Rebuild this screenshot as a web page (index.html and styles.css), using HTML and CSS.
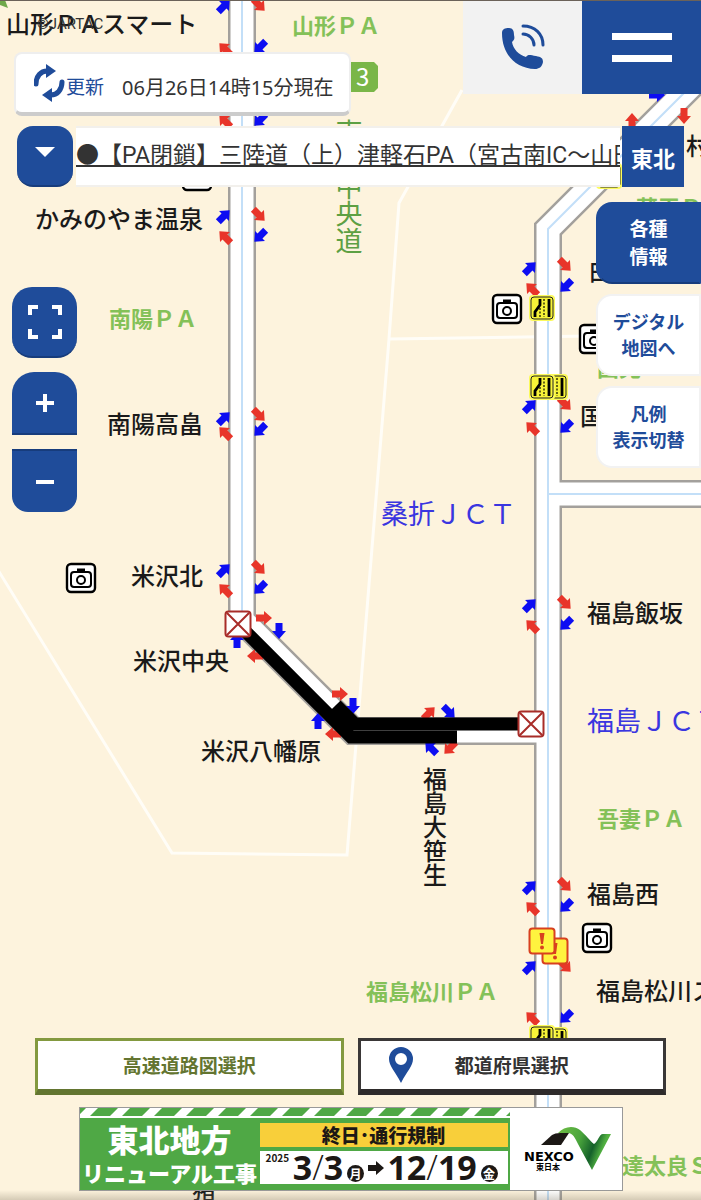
FILE: index.html
```html
<!DOCTYPE html>
<html lang="ja">
<head>
  <meta charset="UTF-8">
  <meta name="viewport" content="width=device-width, initial-scale=1.0">
  <title>道路交通情報</title>
  <link rel="stylesheet" href="styles.css">
</head>
<body>
  <div class="screen">

    <!-- 地図 -->
    <svg class="map" viewBox="0 0 701 1200" preserveAspectRatio="xMidYMid slice">
      <defs>
        <path id="arrow" d="M-8 -3.5H0V-7L8 0L0 7V3.5H-8Z"/>
        <g id="camera">
          <rect x="-14" y="-14" width="28" height="28" rx="4" fill="#fff" stroke="#000" stroke-width="2.4"/>
          <rect x="-10" y="-6" width="20" height="15" rx="3" fill="none" stroke="#000" stroke-width="2"/>
          <path d="M-4 -8H4" stroke="#000" stroke-width="3"/>
          <circle cy="2" r="4" fill="none" stroke="#000" stroke-width="2"/>
        </g>
        <g id="lane">
          <rect x="-13" y="-13" width="26" height="26" rx="4" fill="#fbfa5c"/>
          <rect x="-11" y="-11" width="22" height="22" rx="3" fill="#f7f338" stroke="#222" stroke-width="1"/>
          <path d="M-7 9V4L-2 -3V-9M7 -9V9" fill="none" stroke="#000" stroke-width="2.8"/>
          <path d="M-2 0V9M2 -9V9" stroke="#000" stroke-width="1.2" stroke-dasharray="2 1.5"/>
        </g>
        <g id="closed">
          <rect x="-12.5" y="-12.5" width="25" height="25" rx="3" fill="#fff" stroke="#a82c28" stroke-width="2"/>
          <path d="M-11 -11L11 11M11 -11L-11 11" stroke="#a82c28" stroke-width="2"/>
        </g>
        <g id="warn">
          <rect x="-12.5" y="-12.5" width="25" height="25" rx="3" fill="#fff33f" stroke="#d8401f" stroke-width="2"/>
          <path d="M-2.5 -8H2.5L1 3H-1Z" fill="#d8401f"/>
          <circle cy="6.5" r="2" fill="#d8401f"/>
        </g>
      </defs>

      <!-- 県境 -->
      <path class="border-line" d="M462 90L399 203L389 339L347 855L172 853L-2 570M389 339L590 336"/>
      <path d="M0 0H5L8 8L0 5Z" fill="#6fa84a"/>

      <!-- IC名・PA名 -->
      <g class="ic">
        <text x="6" y="33">山形ＰＡスマート</text>
        <text x="35" y="228">かみのやま温泉</text>
        <text x="107" y="433">南陽高畠</text>
        <text x="131" y="585">米沢北</text>
        <text x="133" y="670">米沢中央</text>
        <text x="201" y="760">米沢八幡原</text>
        <text x="686" y="155">村田</text>
        <text x="588" y="280">白石</text>
        <text x="580" y="425">国見</text>
        <text x="587" y="622">福島飯坂</text>
        <text x="587" y="903">福島西</text>
        <text x="596" y="1000">福島松川スマート</text>
        <text class="vertical" x="435" y="767">福島大笹生</text>
        <text class="vertical" x="204" y="1178">猪苗代</text>
      </g>
      <g class="pa">
        <text x="292" y="34">山形ＰＡ</text>
        <text x="109" y="327">南陽ＰＡ</text>
        <text x="636" y="216">蔵王ＰＡ</text>
        <text x="597" y="376">国見ＳＡ</text>
        <text x="597" y="827">吾妻ＰＡ</text>
        <text x="366" y="1000">福島松川ＰＡ</text>
        <text x="600" y="1174">安達太良ＳＡ</text>
      </g>
      <g class="jct">
        <text x="381" y="524">桑折ＪＣＴ</text>
        <text x="587" y="731">福島ＪＣＴ</text>
      </g>
      <text class="road-name vertical" x="349" y="119">東北中央道</text>
      <path d="M340 62H374L378 66V88L374 92H340Z" fill="#7ab648"/>
      <text class="route-no" x="356" y="86">3</text>

      <!-- 道路 -->
      <g class="road road-edge">
        <path d="M242 -10V620L353 731H548"/>
        <path d="M720 57L548 229V1210"/>
        <path d="M548 494H720"/>
      </g>
      <g class="road road-body">
        <path d="M242 -10V620L353 731H548"/>
        <path d="M720 57L548 229V1210"/>
        <path d="M548 494H720"/>
      </g>
      <g class="road road-center">
        <path d="M242 -10V620"/>
        <path d="M720 57L548 229V1210"/>
        <path d="M548 494H720"/>
      </g>

      <!-- 出入口の矢印 -->
      <g fill="#e8352a">
        <use href="#arrow" transform="translate(259 5) rotate(45)"/>
        <use href="#arrow" transform="translate(225 49) rotate(-135)"/>
        <use href="#arrow" transform="translate(225 121) rotate(-135)"/>
        <use href="#arrow" transform="translate(259 215) rotate(45)"/>
        <use href="#arrow" transform="translate(225 237) rotate(-135)"/>
        <use href="#arrow" transform="translate(259 415) rotate(45)"/>
        <use href="#arrow" transform="translate(225 433) rotate(-135)"/>
        <use href="#arrow" transform="translate(259 568) rotate(45)"/>
        <use href="#arrow" transform="translate(225 590) rotate(-135)"/>
        <use href="#arrow" transform="translate(264 618)"/>
        <use href="#arrow" transform="translate(255 656) rotate(180)"/>
        <use href="#arrow" transform="translate(340 694)"/>
        <use href="#arrow" transform="translate(333 734) rotate(180)"/>
        <use href="#arrow" transform="translate(429 713) rotate(-45)"/>
        <use href="#arrow" transform="translate(450 748) rotate(135)"/>
        <use href="#arrow" transform="translate(565 265) rotate(45)"/>
        <use href="#arrow" transform="translate(532 289) rotate(-135)"/>
        <use href="#arrow" transform="translate(565 404) rotate(45)"/>
        <use href="#arrow" transform="translate(532 428) rotate(-135)"/>
        <use href="#arrow" transform="translate(565 603) rotate(45)"/>
        <use href="#arrow" transform="translate(532 626) rotate(-135)"/>
        <use href="#arrow" transform="translate(565 885) rotate(45)"/>
        <use href="#arrow" transform="translate(532 908) rotate(-135)"/>
        <use href="#arrow" transform="translate(565 966) rotate(45)"/>
        <use href="#arrow" transform="translate(532 1018) rotate(-135)"/>
        <use href="#arrow" transform="translate(632 121) rotate(-90)"/>
        <use href="#arrow" transform="translate(684 116) rotate(90)"/>
      </g>
      <g fill="#0d0df2">
        <use href="#arrow" transform="translate(224 6) rotate(-45)"/>
        <use href="#arrow" transform="translate(260 47) rotate(135)"/>
        <use href="#arrow" transform="translate(260 120) rotate(135)"/>
        <use href="#arrow" transform="translate(224 216) rotate(-45)"/>
        <use href="#arrow" transform="translate(260 236) rotate(135)"/>
        <use href="#arrow" transform="translate(224 418) rotate(-45)"/>
        <use href="#arrow" transform="translate(260 430) rotate(135)"/>
        <use href="#arrow" transform="translate(224 570) rotate(-45)"/>
        <use href="#arrow" transform="translate(260 588) rotate(135)"/>
        <use href="#arrow" transform="translate(279 631) rotate(90)"/>
        <use href="#arrow" transform="translate(237 640) rotate(-90)"/>
        <use href="#arrow" transform="translate(353 706) rotate(90)"/>
        <use href="#arrow" transform="translate(318 721) rotate(-90)"/>
        <use href="#arrow" transform="translate(449 712) rotate(45)"/>
        <use href="#arrow" transform="translate(431 748) rotate(-135)"/>
        <use href="#arrow" transform="translate(530 268) rotate(-45)"/>
        <use href="#arrow" transform="translate(566 286) rotate(135)"/>
        <use href="#arrow" transform="translate(530 406) rotate(-45)"/>
        <use href="#arrow" transform="translate(566 427) rotate(135)"/>
        <use href="#arrow" transform="translate(530 605) rotate(-45)"/>
        <use href="#arrow" transform="translate(566 624) rotate(135)"/>
        <use href="#arrow" transform="translate(530 887) rotate(-45)"/>
        <use href="#arrow" transform="translate(566 906) rotate(135)"/>
        <use href="#arrow" transform="translate(530 967) rotate(-45)"/>
        <use href="#arrow" transform="translate(566 1017) rotate(135)"/>
        <use href="#arrow" transform="translate(657 95)"/>
      </g>

      <!-- 通行止め区間 -->
      <path class="closed-line" d="M240 626L351 737H457"/>
      <path class="closed-line" d="M336 705L355 724H531"/>

      <!-- 規制アイコン -->
      <use href="#camera" x="197" y="176"/>
      <use href="#camera" x="507" y="309"/>
      <use href="#camera" x="594" y="339"/>
      <use href="#camera" x="81" y="578"/>
      <use href="#camera" x="597" y="938"/>
      <use href="#lane" x="609" y="176"/>
      <use href="#lane" x="542" y="308"/>
      <use href="#lane" x="555" y="387"/>
      <use href="#lane" x="542" y="387"/>
      <use href="#lane" x="555" y="1040"/>
      <use href="#lane" x="542" y="1038"/>
      <use href="#closed" x="238" y="624"/>
      <use href="#closed" x="531" y="724"/>
      <use href="#warn" x="555" y="951"/>
      <use href="#warn" x="542" y="941"/>
    </svg>

    <!-- ヘッダー -->
    <header class="header">
      <div class="header-left">
        <p class="copyright">©JARTAC</p>
        <div class="update-box">
          <button class="update-button" type="button">
            <svg width="32" height="38" viewBox="0 0 32 38">
              <path d="M2 20C2 12 7 7 13 7" fill="none" stroke="#1f4c9a" stroke-width="5" stroke-linecap="round"/>
              <path d="M12 0L22 7L12 14Z" fill="#1f4c9a"/>
              <path d="M28 18C28 26 23 31 17 31" fill="none" stroke="#1f4c9a" stroke-width="5" stroke-linecap="round"/>
              <path d="M18 24L8 31L18 38Z" fill="#1f4c9a"/>
            </svg>
            <span>更新</span>
          </button>
          <span class="update-time">06月26日14時15分現在</span>
        </div>
      </div>
      <a class="header-tel" href="#" aria-label="電話">
        <svg width="44" height="46" viewBox="0 0 44 46">
          <path d="M1 9C1 5 4 4 8 4C12 4 13 7 13 11C14 15 13 16 11 18C12 25 18 31 25 33C27 30 29 31 35 32C40 33 42 34 42 38C41 43 38 45 34 45C14 44 1 30 1 9Z" fill="#1f4c9a"/>
          <path d="M22 10C28 10 33 15 33 21M22 2C34 2 42 10 42 21" fill="none" stroke="#1f4c9a" stroke-width="3" stroke-linecap="round"/>
        </svg>
      </a>
      <button class="header-menu" type="button" aria-label="メニュー"><span></span><span></span></button>
    </header>

    <!-- お知らせ -->
    <div class="news">
      <button class="news-toggle" type="button" aria-label="お知らせを開く"></button>
      <div class="news-text"><a href="#">●【PA閉鎖】三陸道（上）津軽石PA（宮古南IC～山田IC）</a></div>
      <button class="news-area" type="button">東北</button>
    </div>

    <!-- 地図の操作ボタン -->
    <div class="controls">
      <div class="zoom">
        <button class="zoom-full" type="button" aria-label="全体表示">
          <svg width="34" height="34" viewBox="0 0 34 34">
            <path d="M2 10V2H10M24 2H32V10M32 24V32H24M10 32H2V24" fill="none" stroke="#fff" stroke-width="4"/>
          </svg>
        </button>
        <button class="zoom-in" type="button" aria-label="拡大">
          <svg width="18" height="18" viewBox="0 0 18 18"><path d="M0 9H18M9 0V18" stroke="#fff" stroke-width="4"/></svg>
        </button>
        <button class="zoom-out" type="button" aria-label="縮小">
          <svg width="18" height="18" viewBox="0 0 18 18"><path d="M0 9H18" stroke="#fff" stroke-width="4"/></svg>
        </button>
      </div>
      <nav class="side">
        <a class="side-button side-info" href="#">各種<br>情報</a>
        <a class="side-button" href="#">デジタル<br>地図へ</a>
        <a class="side-button" href="#">凡例<br>表示切替</a>
      </nav>
    </div>

    <!-- フッター -->
    <footer class="footer">
      <div class="select-row">
        <button class="select-button green" type="button"><span>高速道路図選択</span></button>
        <button class="select-button" type="button">
          <svg width="24" height="36" viewBox="0 0 24 36">
            <path fill-rule="evenodd" d="M12 0A12 12 0 0 1 24 12C24 19 18 24 12 36C6 24 0 19 0 12A12 12 0 0 1 12 0ZM12 6A6 6 0 1 0 12 18A6 6 0 1 0 12 6Z" fill="#1f4c9a"/>
          </svg>
          <span>都道府県選択</span>
        </button>
      </div>

      <a class="banner" href="#">
        <div class="banner-main">
          <svg class="banner-stripe" width="100%" height="10">
            <defs>
              <pattern id="stripe" width="32" height="10" patternUnits="userSpaceOnUse">
                <path d="M18 0H38L30 8H10ZM-14 0H6L-2 8H-22Z" fill="#4fa845"/>
              </pattern>
            </defs>
            <rect width="100%" height="10" fill="#fff"/>
            <rect width="100%" height="10" fill="url(#stripe)"/>
          </svg>
          <div class="banner-body">
            <div class="banner-title">
              <strong>東北地方</strong>
              <span>リニューアル工事</span>
            </div>
            <div class="banner-info">
              <div class="banner-label">終日･通行規制</div>
              <div class="banner-date">
                <small>2025</small>
                <b>3<i>/</i>3</b>
                <em>月</em>
                <svg width="16" height="14" viewBox="0 0 16 14"><path d="M0 4H8V0L16 7L8 14V10H0Z" fill="#1c1815"/></svg>
                <b>12<i>/</i>19</b>
                <em>金</em>
              </div>
            </div>
          </div>
        </div>
        <svg class="banner-logo" width="112" height="82" viewBox="0 0 112 82">
          <defs>
            <linearGradient id="leaf" x1="0" y1="0.2" x2="1" y2="0.5">
              <stop offset="0" stop-color="#6cbb45"/>
              <stop offset="0.4" stop-color="#4aa53c"/>
              <stop offset="0.68" stop-color="#14602a"/>
              <stop offset="0.85" stop-color="#4fae40"/>
              <stop offset="1" stop-color="#6cbb45"/>
            </linearGradient>
          </defs>
          <path d="M31 37L42 27Q45 25 50 25H59L51 37Z" fill="#1c1815"/>
          <path d="M48 25C54 18 64 17 70 22C76 27 80 33 84 36C88 34 89 26 93 26H101L82 62L68 36C65 30 63 25 58 25Z" fill="url(#leaf)"/>
          <text class="logo-name" x="14" y="53">NEXCO</text>
          <text class="logo-sub" x="26" y="62">東日本</text>
        </svg>
      </a>
    </footer>
  </div>
</body>
</html>
```

FILE: styles.css
```css
* {
  box-sizing: border-box;
}
body {
  margin: 0;
  font-family: "Noto Sans", "Noto Sans CJK JP", sans-serif;
  color: #333;
  background-color: #fdf3dd;
}
button {
  font-family: inherit;
  padding: 0;
  border: 0;
  cursor: pointer;
}
a {
  color: inherit;
  text-decoration: none;
}
.screen {
  position: relative;
  display: flex;
  flex-direction: column;
  min-height: 100vh;
  overflow: hidden;
}
.screen::before {
  content: "";
  position: absolute;
  z-index: 1;
  top: 0;
  left: 0;
  right: 0;
  height: 1px;
  background-color: #6b6259;
}
.screen::after {
  content: "";
  position: absolute;
  left: 0;
  right: 0;
  bottom: 0;
  height: 10px;
  background: linear-gradient(rgba(120, 110, 90, 0), rgba(120, 110, 90, 0.3));
}

/* 地図 */
.map {
  position: absolute;
  top: 0;
  left: 0;
  width: 100%;
  height: 100%;
  font-family: "Noto Sans CJK JP", sans-serif;
}
.border-line {
  fill: none;
  stroke: #fffdf7;
  stroke-width: 3;
}
.ic {
  font-size: 24px;
  font-weight: 500;
  fill: #1a1a1a;
}
.pa {
  font-size: 22px;
  font-weight: 700;
  fill: #84c158;
}
.jct {
  font-size: 27px;
  fill: #3a36e0;
}
.road-name {
  font-size: 27px;
  fill: #5da043;
}
.route-no {
  font-size: 24px;
  fill: #fff;
}
.vertical {
  writing-mode: vertical-rl;
}
.road {
  fill: none;
}
.road-edge {
  stroke: #a3a09c;
  stroke-width: 28;
}
.road-body {
  stroke: #fff;
  stroke-width: 23;
}
.road-center {
  stroke: #c3dff8;
  stroke-width: 2;
}
.closed-line {
  fill: none;
  stroke: #000;
  stroke-width: 13;
}

/* ヘッダー */
.header {
  position: relative;
  display: flex;
  align-items: flex-start;
}
.header-left {
  flex: 1;
  padding-left: 14px;
}
.copyright {
  margin: 14px 0 18px 23px;
  font-family: Roboto, sans-serif;
  font-size: 15px;
  line-height: 20px;
}
.update-box {
  display: inline-flex;
  align-items: center;
  width: 337px;
  height: 64px;
  padding-left: 18px;
  background-color: #fff;
  border: 2px solid #eee;
  border-bottom: 4px solid #ccc;
  border-radius: 8px;
}
.update-button {
  display: flex;
  align-items: center;
  background: none;
  color: #1f4c9a;
  font-size: 19px;
}
.update-button span,
.update-time {
  padding-top: 6px;
}
.update-time {
  margin-left: 18px;
  font-size: 20px;
}
.header-tel,
.header-menu {
  display: flex;
  align-items: center;
  justify-content: center;
  width: 119px;
  height: 94px;
}
.header-tel {
  background-color: #f2f2f2;
}
.header-menu {
  flex-direction: column;
  gap: 15px;
  background-color: #1f4c9a;
}
.header-menu span {
  width: 60px;
  height: 7px;
  background-color: #fff;
}

/* お知らせ */
.news {
  position: relative;
  display: flex;
  margin-top: 10px;
  padding: 0 17px;
}
.news-toggle {
  width: 56px;
  height: 61px;
  background-color: #1f4c9a;
  border-bottom: 2px solid #173c7c;
  border-radius: 16px;
}
.news-toggle::before {
  content: "";
  display: block;
  width: 0;
  margin: 0 auto 8px;
  border: 10px solid transparent;
  border-top-color: #fff;
  border-bottom: 0;
}
.news-text {
  flex: 1;
  min-width: 0;
  margin: 0 2px 0 3px;
  overflow: hidden;
  white-space: nowrap;
  background-color: #fff;
  border: 2px solid #f2f0ec;
  border-width: 2px 0;
  font-family: Roboto, "Noto Sans CJK JP", sans-serif;
  font-size: 23px;
  line-height: 56px;
}
.news-text a {
  text-decoration: underline;
}
.news-area {
  width: 62px;
  background-color: #1f4c9a;
  color: #fff;
  font-size: 22px;
  font-weight: 700;
}

/* 操作ボタン */
.controls {
  position: relative;
  flex: 1;
  display: flex;
  align-items: flex-start;
  justify-content: space-between;
  margin-top: 15px;
}
.zoom {
  display: flex;
  flex-direction: column;
  gap: 14px;
  padding: 85px 0 0 12px;
}
.zoom button {
  display: flex;
  align-items: center;
  justify-content: center;
  width: 65px;
  height: 63px;
  background-color: #1f4c9a;
}
.zoom .zoom-full {
  height: 71px;
  border-bottom: 2px solid #173c7c;
  border-radius: 20px;
}
.zoom .zoom-in {
  border-bottom: 2px solid #173c7c;
  border-radius: 22px 22px 0 0;
}
.zoom .zoom-out {
  border-top: 2px solid #173c7c;
  border-radius: 0 0 16px 16px;
}
.side {
  display: flex;
  flex-direction: column;
  gap: 10px;
}
.side-button {
  display: flex;
  align-items: center;
  justify-content: center;
  width: 105px;
  height: 82px;
  background-color: #fff;
  border: 2px solid #f2f2f2;
  border-radius: 16px 0 0 16px;
  color: #1f4c9a;
  font-size: 18px;
  font-weight: 700;
  line-height: 26px;
  text-align: center;
}
.side-info {
  background-color: #1f4c9a;
  border-color: #1f4c9a;
  border-bottom-color: #173c7c;
  color: #fff;
  font-size: 19px;
  line-height: 28px;
}

/* フッター */
.footer {
  position: relative;
  display: flex;
  flex-direction: column;
  align-items: center;
  gap: 12px;
  padding: 0 35px 9px;
}
.select-row {
  display: flex;
  gap: 14px;
  width: 100%;
}
.select-button {
  flex: 1;
  display: grid;
  grid-template-columns: 1fr auto 1fr;
  align-items: center;
  height: 57px;
  background-color: #fff;
  border: 3px solid #3a3737;
  border-bottom: 6px solid #2e2b2b;
  color: #333;
  font-size: 19px;
  font-weight: 700;
}
.select-button svg {
  margin-left: 28px;
}
.select-button span {
  grid-column: 2;
}
.select-button.green {
  border-color: #83993f;
  border-bottom-color: #637530;
  color: #637530;
}

/* バナー */
.banner {
  display: flex;
  width: 544px;
  max-width: 100%;
  height: 84px;
  background-color: #fff;
  border: 1px solid #999;
  color: #1c1815;
}
.banner-main {
  flex: 1;
  display: flex;
  flex-direction: column;
  background-color: #4fa845;
}
.banner-stripe {
  display: block;
}
.banner-body {
  flex: 1;
  display: flex;
  font-family: "Noto Sans CJK JP", sans-serif;
}
.banner-title {
  display: flex;
  flex-direction: column;
  align-items: center;
  justify-content: center;
  width: 180px;
  color: #fff;
  font-weight: 900;
}
.banner-title strong {
  font-size: 31px;
  font-weight: 900;
  line-height: 36px;
}
.banner-title span {
  font-size: 22px;
  line-height: 30px;
}
.banner-info {
  flex: 1;
  display: flex;
  flex-direction: column;
  gap: 4px;
  padding: 5px 2px 6px 0;
}
.banner-label {
  background-color: #f8cf3a;
  font-size: 19px;
  font-weight: 900;
  line-height: 24px;
  text-align: center;
}
.banner-date {
  flex: 1;
  display: flex;
  align-items: center;
  justify-content: space-between;
  padding: 0 10px 0 6px;
  background-color: #fff;
}
.banner-date small {
  align-self: flex-start;
  font-size: 10px;
  font-weight: 700;
  line-height: 14px;
}
.banner-date b {
  font-family: "Open Sans", sans-serif;
  font-size: 34px;
  font-weight: 700;
  line-height: 33px;
}
.banner-date i {
  font-style: normal;
  font-weight: 300;
}
.banner-date em {
  align-self: flex-end;
  width: 17px;
  height: 17px;
  margin-bottom: 2px;
  border-radius: 50%;
  background-color: #1c1815;
  color: #fff;
  font-size: 12px;
  font-style: normal;
  font-weight: 700;
  line-height: 17px;
  text-align: center;
}
.logo-name {
  font-family: "DejaVu Sans", sans-serif;
  font-size: 13px;
  font-weight: 700;
}
.logo-sub {
  font-family: "Noto Sans CJK JP", sans-serif;
  font-size: 8px;
  font-weight: 700;
}
```
